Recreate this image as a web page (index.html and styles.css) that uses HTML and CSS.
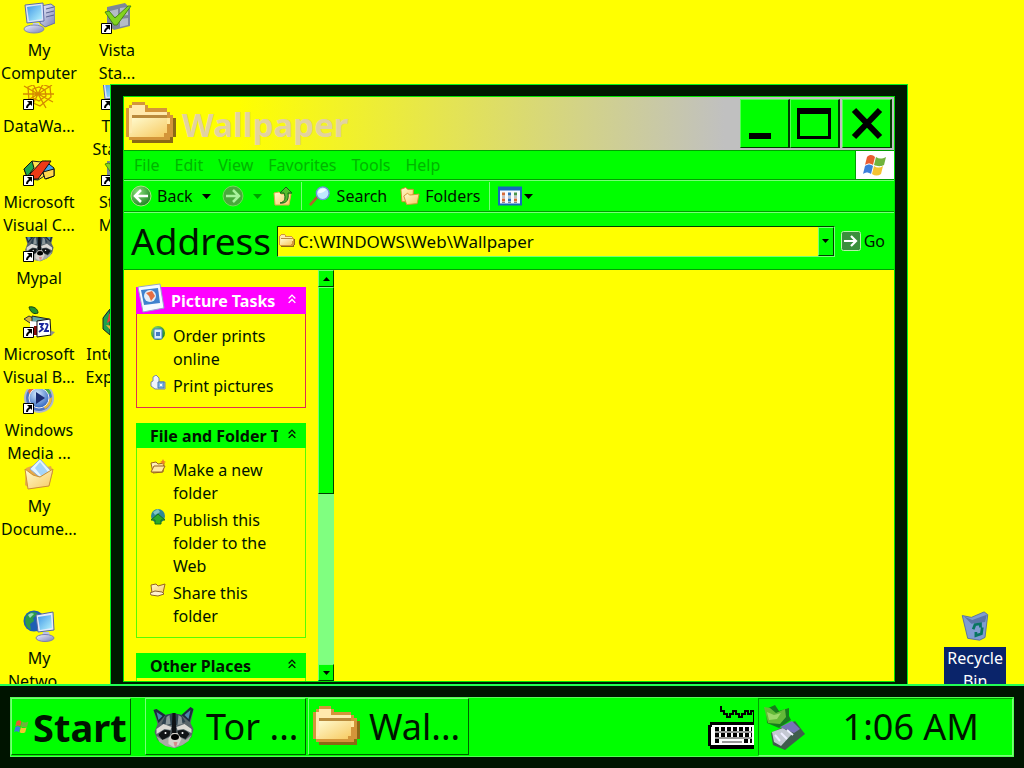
FILE: index.html
```html
<!DOCTYPE html>
<html lang="en">
<head>
<meta charset="utf-8">
<title>Wallpaper</title>
<link rel="stylesheet" href="styles.css">
</head>
<body>
<svg class="sprites" aria-hidden="true">
  <defs>
    <linearGradient id="gold" x1="0" y1="0" x2="1" y2="1"><stop offset="0" stop-color="#fffbd0"/><stop offset="1" stop-color="#f7ca62"/></linearGradient>
    <linearGradient id="screen" x1="0" y1="0" x2="1" y2="1"><stop offset="0" stop-color="#3f97e8"/><stop offset="1" stop-color="#b8f4fc"/></linearGradient>
    <linearGradient id="metal" x1="0" y1="0" x2="1" y2="1"><stop offset="0" stop-color="#f4f4ff"/><stop offset="1" stop-color="#7880b4"/></linearGradient>
    <radialGradient id="green" cx=".35" cy=".3" r=".8"><stop offset="0" stop-color="#8ae07a"/><stop offset="1" stop-color="#167c1c"/></radialGradient>
    <radialGradient id="blue" cx=".4" cy=".3" r=".8"><stop offset="0" stop-color="#d8ecff"/><stop offset="1" stop-color="#1c56b8"/></radialGradient>
  </defs>
  <symbol id="shortcut" viewBox="0 0 11 11"><path fill="#fff" stroke="#000" d="M.5.5h10v10H.5z"/><path d="M4 2h5v5L7.500 5.500C6 6.500 5 7.500 5 9H3c0-2 1-3.500 3-5z"/></symbol>
  <symbol id="folder" viewBox="0 0 16 14"><g shape-rendering="crispEdges"><path fill="#8a6a14" d="M2 12h11v-1h2V5h1v6h-1v2H2z"/><path fill="#d3953a" d="M1 1h1V0h4v1h1v1h6v1h1v1h1v7h-1v1H1v-1H0V2h1z"/><path fill="#ffe9ac" d="M1 2h1V1h4v2h7v1H3v1H2v5H1z"/><path fill="#b98a3c" d="M2 4h11v1H2z"/><path fill="url(#gold)" d="M2 5h11v5h-1v1H1v-1h1z"/><path fill="#ffe9a0" d="M13 5h1v2h-1z"/></g></symbol>
  <symbol id="flag" viewBox="0 0 24 22"><path fill="#e95b31" d="M4 3c3-3 6-2 8 0l-2 8c-3-2-5-2-8 0z"/><path fill="#70b33c" d="M13 3c3 2 6 2 10 0l-2 8c-4 2-7 1-10 0z"/><path fill="#3b7edb" d="M2 12c3-2 5-2 8 0l-2 8c-3-2-5-2-8 0z"/><path fill="#f3c331" d="M11 12c3 2 6 2 9 0l-2 8c-3 2-6 2-9 0z"/></symbol>
  <symbol id="computer" viewBox="0 0 32 32"><path fill="url(#metal)" stroke="#6870a0" d="M18 4l10-2 4 3v16l-10 4-5-4z"/><path fill="none" stroke="#59628f" d="M23 7l8-2M23 11l8-2M23 15l8-2"/><path fill="#dde4f8" stroke="#5a6ba8" d="M2 3l18-2 1 18-17 2z"/><path fill="url(#screen)" d="M4 5l14-2 1 14-13 2z"/><path fill="#c4cdec" d="M10 21h6l1 4h-8z"/><ellipse cx="11" cy="27" rx="10" ry="4" fill="url(#metal)" stroke="#8088b0"/></symbol>
  <symbol id="network" viewBox="0 0 32 32"><circle cx="11" cy="11" r="10.500" fill="#1d5fb4"/><path fill="#2d9c46" d="M3 6c4-5 9-5 12-2l-5 4 1 3-4 3 1 6C3 18 1 12 3 6z"/><path fill="#9adbb4" d="M5 5c2-2 5-2 6-1L7 8z"/><path fill="#e4eafa" stroke="#5366a4" d="M13 5l17-3 1 18-16 2z"/><path fill="url(#screen)" d="M15 7l13-2 1 13-12 2z"/><path fill="#bcc2e8" d="M20 22h6l1 4h-8z"/><ellipse cx="22" cy="28" rx="9" ry="3.500" fill="url(#metal)" stroke="#7d7eb0"/></symbol>
  <symbol id="raccoon" viewBox="0 0 44 44"><path fill="#5a666a" d="M2 5l3-1 9 6 8-2 8 2 9-8 3 3-3 13 3 6-2 8-7 7-9 4-10-2-8-6-3-8 3-8z"/><path fill="#1c2c3c" d="M2 5l3-1 9 6-7 8zM42 4l-3-2-9 8 8 7z"/><path fill="#4c86ac" d="M5 7l6 4-4 4zM39 5l-6 5 4 4z"/><path fill="#2f424e" d="M14 10l8-2 8 2 4 7-9 3h-5l-10-1z"/><path fill="#8a9698" d="M15 12l3-2 1 9-5 1zM27 10l3 2 1 7-5 1z"/><path fill="#0f1214" d="M21 8h3l1 22h-5z"/><path fill="#dcdad4" d="M5 24l7-5 8 3-1 3-6-1-8 5zM25 22l8-3 7 5v4l-8-4-6 1z"/><path fill="#111416" d="M7 30c3-5 7-6 12-4l-1 5-7 4zM26 26c5-2 9-1 12 3l-4 5-7-3z"/><path fill="#a9aaa5" d="M5 31l6 4 8-3 3-3 6 3 6 3 6-5-3 6-6 4-8 3-9-2-6-4z"/><path fill="#d7d2cb" d="M17 33l4-5h5l4 6-3 6-5 2-5-3z"/><ellipse cx="23.500" cy="32" rx="4" ry="3"/><path fill="#d98c8c" d="M22 37h4l-1 4h-2z"/><circle cx="14" cy="28" r="1" fill="#fff"/><circle cx="31" cy="28" r="1" fill="#fff"/></symbol>
  <symbol id="check" viewBox="0 0 32 32"><path fill="#7e8796" d="M6 5l18-4 5 5v18l-16 4-7-5z"/><path fill="#b5bcc6" d="M9 9l8-2v7l-8 2zM19 6l8-1v8l-8 1zM19 17l8-1v7l-8 2z"/><path fill="#83d51e" stroke="#4a8a10" d="M4 10l4-1 6 7L27 4h3L16 23h-3z"/></symbol>
  <symbol id="web" viewBox="0 0 32 32"><g fill="none" stroke="#d48a00" stroke-width="1.300"><path d="M1 8l14 8 14-9M2 24l13-8 15 8M8 2l7 14 7-14M8 30l7-14 8 14M0 16h31"/><path d="M10 11l6-2 6 3 1 6-7 5-6-3zM5 9l10-4 12 4 1 10-11 9-11-5z"/></g></symbol>
  <symbol id="visualc" viewBox="0 0 32 32"><path fill="#ffe34e" stroke="#222" d="M1 15l8-8 9 1 5 13-8 5-10-1z"/><path fill="#20a84a" stroke="#111" d="M1 15l8-8 2 7-7 9z"/><path fill="#47a5e8" stroke="#111" d="M22 7l9 7v8l-8 3-4-7z"/><path fill="#ffd84d" stroke="#111" d="M20 18l11-3v7l-9 3z"/><path fill="#ee3a16" stroke="#111" d="M7 20L19 7h9L15 25H8z"/></symbol>
  <symbol id="visualb" viewBox="0 0 32 32"><path fill="#249526" stroke="#154016" d="M6 1c5-1 9 2 9 6-4 2-8-1-9-6z"/><path fill="#d7b73f" stroke="#333" d="M1 13l5-3 6 3-5 4z"/><path fill="#67a8a4" stroke="#222" d="M9 10l17 3v6L9 16z"/><path fill="#fff" d="M7 15l9 1v14H7z"/><path fill="#8b0d0d" d="M11 20h3v9h-3z"/><path fill="#fff" stroke="#111" d="M14 15l13-2 1 16-14 2z"/><path fill="none" stroke="#1a259f" stroke-width="1.800" d="M16 18h4l-2 3 2 2-4 3M22 18c4-1 3 2 0 7h4"/><path fill="#8b908c" d="M28 25l4 1-4 4z"/></symbol>
  <symbol id="media" viewBox="0 0 32 32"><circle cx="16" cy="16" r="14" fill="#5075c4" stroke="#b1bacb" stroke-width="2"/><path fill="#e76d3b" d="M5 9A13 13 0 0 1 16 3v6L8 15z"/><path fill="#49aa4c" d="M17 3a13 13 0 0 1 11 8l-7 4z"/><path fill="#e8b73c" d="M29 15a13 13 0 0 1-7 12l-3-5z"/><circle cx="16" cy="16" r="10" fill="url(#blue)" stroke="#eee"/><path fill="#1b2c72" d="M13 10l9 6-9 6z"/></symbol>
  <symbol id="documents" viewBox="0 0 32 32"><path fill="#e6aa48" d="M3 10l8-3 5 4 12-3 2 6-4 14-19 3-5-4z"/><path fill="#e3f5ff" stroke="#90afd6" d="M7 11l10-10 12 13-9 8z"/><path fill="#a5d5fa" d="M12 10l5-6 8 10-6 5z"/><path fill="url(#gold)" stroke="#cc9034" d="M2 11l8 6 7 2 13-8-4 17-21 3z"/></symbol>
  <symbol id="ie" viewBox="0 0 32 32"><circle cx="16" cy="16" r="14" fill="#278bd7"/><path fill="#20a14a" stroke="#222" d="M9 3l-7 9v11l7 6z"/><path fill="#e33e34" d="M8 8l5-3-1 8-6 4z"/><path fill="#f2b632" d="M5 19l7 1v7z"/></symbol>
  <symbol id="bin" viewBox="0 0 32 34"><path fill="#7f9cd0" stroke="#526ca4" d="M2 5l10 2L26 1l4 3-3 25-6 3-13-2z"/><path fill="#5b76a6" d="M4 6l9 4 16-6-2 8-15 2z"/><path fill="none" stroke="#08755f" stroke-width="3" d="M14 20l2-5 6-1v4M24 18l-1 7-6 2v-4"/></symbol>
  <symbol id="back" viewBox="0 0 22 22"><circle cx="11" cy="11" r="10" fill="url(#green)" stroke="#b1dc89"/><path fill="none" stroke="#fff" stroke-width="2.500" d="M18 11H6M11 5l-6 6 6 6"/></symbol>
  <symbol id="forward" viewBox="0 0 22 22"><circle cx="11" cy="11" r="10" fill="#4aa93c" stroke="#76d45d"/><path fill="none" stroke="#a8f29c" stroke-width="2.500" d="M4 11h12M11 5l6 6-6 6"/></symbol>
  <symbol id="down" viewBox="0 0 9 5"><path d="M0 0h9L4.500 5z"/></symbol>
  <symbol id="up" viewBox="0 0 20 20"><path fill="url(#gold)" stroke="#e0a848" d="M1 7l5-1 2 2h10l-2 11H2z"/><path fill="#53bd2c" stroke="#17621c" d="M7 17c5-1 6-5 4-10H7l6-6 6 6h-4c1 6-1 11-8 10z"/></symbol>
  <symbol id="search" viewBox="0 0 24 22"><path stroke="#ad642b" stroke-width="3" d="M1 21l8-9"/><circle cx="15" cy="8" r="7" fill="#bfe9fc" stroke="#708fda" stroke-width="1.500"/><path fill="#f1fdff" d="M10 6c2-4 7-4 9-2-2 2-5 4-9 4z"/></symbol>
  <symbol id="folders" viewBox="0 0 21 20"><path fill="url(#gold)" stroke="#cf8b2a" d="M1 3l5-2 2 2h6v4l-3 9-9 0z"/><path fill="url(#gold)" stroke="#d39637" d="M4 10l4-3 2 2 10-1-2 10-11 1z"/></symbol>
  <symbol id="views" viewBox="0 0 24 19"><path fill="#f7faff" stroke="#1669bd" stroke-width="2" d="M1 1h22v17H1z"/><path fill="#1669bd" d="M1 1h22v3H1z"/><path fill="#d56c3b" d="M4 6h3v3H4zM4 12h3v3H4zM16 12h3v3h-3z"/><path fill="#326fb9" d="M10 6h3v3h-3zM10 12h3v3h-3z"/><path fill="#4a944a" d="M16 6h3v3h-3z"/><path stroke="#888" stroke-dasharray="3 3" d="M4 10.500h15M4 16h15"/></symbol>
  <symbol id="go" viewBox="0 0 20 20"><rect x=".5" y=".5" width="19" height="19" rx="2" fill="#3b8f3c" stroke="#b8f2aa"/><path fill="none" stroke="#fff" stroke-width="2.200" d="M3 10h12M10 5l5 5-5 5"/></symbol>
  <symbol id="minimize" viewBox="0 0 36 36"><path d="M2 27h22v6H2z"/></symbol>
  <symbol id="maximize" viewBox="0 0 36 36"><path fill-rule="evenodd" d="M0 2h34v31H0zm3 6v22h28V8z"/></symbol>
  <symbol id="close" viewBox="0 0 36 36"><path fill="none" stroke="#000" stroke-width="6" d="M5 4l26 27M31 4L5 31"/></symbol>
  <symbol id="chevrons" viewBox="0 0 7 9"><path fill="none" stroke="currentColor" stroke-width="1.200" d="M.5 4L3.500 1l3 3M.5 8l3-3 3 3"/></symbol>
  <symbol id="photo" viewBox="0 0 28 30"><path fill="#f6fbff" stroke="#99a5ca" d="M1 4l22-3 4 24-21 4z"/><path fill="#3f82ce" d="M4 7l17-2 2 15-16 2z"/><circle cx="13" cy="13" r="6" fill="#e4eff9"/><path fill="#e56e43" d="M9 10l6-2 3 5-4 5-2-5z"/></symbol>
  <symbol id="order" viewBox="0 0 16 16"><circle cx="8" cy="8" r="7" fill="url(#green)"/><path fill="#d8edfc" stroke="#457abb" d="M4 4h8v10H4z"/><path fill="#447ac0" d="M6 7h4v4H6z"/></symbol>
  <symbol id="print" viewBox="0 0 16 16"><path fill="#f0f4fa" stroke="#7888a2" d="M3 6V2l3-2 3 3v4h6v7H5l-4-3V7z"/><path fill="#83b9e7" stroke="#4879b3" d="M8 7h6v6H8z"/><path fill="#fff" d="M10 9h2v2h-2z"/></symbol>
  <symbol id="newfolder" viewBox="0 0 16 16"><path fill="url(#gold)" stroke="#986221" d="M1 4l5-1 2 2 6-1-1 9-10 1z"/><path fill="#ffe9a5" stroke="#986221" d="M1 13l3-6h11l-3 6z"/><path fill="#f18023" d="M13 0l1 2 2 1-2 1-1 2-1-2-2-1 2-1z"/></symbol>
  <symbol id="publish" viewBox="0 0 16 16"><circle cx="8" cy="7" r="7" fill="#2e8996"/><path fill="#81c3c0" d="M3 3l5-3 2 3-5 3z"/><path fill="#2daa26" stroke="#17711c" d="M8 5l7 6h-4v4H5v-4H1z"/></symbol>
  <symbol id="share" viewBox="0 0 16 16"><path fill="url(#gold)" stroke="#986221" d="M1 3l5-1 2 2 7-2-2 9H2z"/><path fill="#fff2cf" stroke="#8b642f" d="M0 11l5-2 7 1 2 2-6 2-7-1z"/></symbol>
  <symbol id="keyboard" viewBox="0 0 46 44"><g shape-rendering="crispEdges"><path fill="none" stroke="#000" stroke-width="2" d="M13 1v5h3v3h3v3h3V9h3V6h3v3h3v3h3V9h3V6h3v3h3V6h3v11"/><path d="M2 17h44v27H2v-3H0V20h2z"/><path fill="#fff" d="M4 20h42v20H3V22h1z"/><path stroke="#000" stroke-width="4" stroke-dasharray="4 2" d="M7 24h37M7 30h37M7 36h5M36 36h8"/><path stroke="#999" stroke-width="2" d="M7 27h37M7 33h37M14 37h20"/></g></symbol>
  <symbol id="hardware" viewBox="0 0 42 46"><path fill="#177c1c" d="M3 5l9-4 4 6 10-3v8l2 4-12 8L4 19z"/><path fill="#63ba38" d="M1 3l6 1 6 5 9-4 1 8-6 7-12-1z"/><path fill="#9bd96a" d="M4 8l7 3 7-2-4 6-8 1z"/><path fill="#3f5c4c" d="M8 29l24-12 10 13-20 16-12-5z"/><path fill="#c4c8d2" d="M9 28l11-4 9 6-11 12-7-4z"/><path fill="#7874b7" d="M17 23l12-6 8 8-6 4z"/><path stroke="#eef" stroke-width="2" d="M12 31l5 6M18 29l6 6M24 26l6 5"/></symbol>
</svg>

<main class="desktop">
  <div class="icons">
    <a class="shortcut" href="#"><svg class="art"><use href="#computer"/></svg><span class="caption">My<br>Computer</span></a>
    <a class="shortcut" href="#"><svg class="art"><use href="#web"/></svg><svg class="badge"><use href="#shortcut"/></svg><span class="caption">DataWa...</span></a>
    <a class="shortcut" href="#"><svg class="art"><use href="#visualc"/></svg><svg class="badge"><use href="#shortcut"/></svg><span class="caption">Microsoft<br>Visual C...</span></a>
    <a class="shortcut" href="#"><svg class="art"><use href="#raccoon"/></svg><svg class="badge"><use href="#shortcut"/></svg><span class="caption">Mypal</span></a>
    <a class="shortcut" href="#"><svg class="art"><use href="#visualb"/></svg><svg class="badge"><use href="#shortcut"/></svg><span class="caption">Microsoft<br>Visual B...</span></a>
    <a class="shortcut" href="#"><svg class="art"><use href="#media"/></svg><svg class="badge"><use href="#shortcut"/></svg><span class="caption clear">Windows<br>Media ...</span></a>
    <a class="shortcut" href="#"><svg class="art"><use href="#documents"/></svg><span class="caption">My<br>Docume...</span></a>
    <a class="shortcut last-row" href="#"><svg class="art"><use href="#network"/></svg><span class="caption">My<br>Netwo...</span></a>
    <a class="shortcut second" href="#"><svg class="art"><use href="#check"/></svg><svg class="badge"><use href="#shortcut"/></svg><span class="caption">Vista<br>Sta...</span></a>
    <a class="shortcut second" href="#"><svg class="art"><use href="#computer"/></svg><svg class="badge"><use href="#shortcut"/></svg><span class="caption">Tiny<br>Start...</span></a>
    <a class="shortcut second" href="#"><svg class="art"><use href="#check"/></svg><svg class="badge"><use href="#shortcut"/></svg><span class="caption">Style<br>Ma...</span></a>
    <a class="shortcut second fifth-row" href="#"><svg class="art"><use href="#ie"/></svg><span class="caption">Internet<br>Explorer</span></a>
  </div>
  <a class="shortcut recycle" href="#"><svg class="art"><use href="#bin"/></svg><span class="caption">Recycle<br>Bin</span></a>

  <section class="window">
    <div class="frame">
      <header class="titlebar">
        <svg class="title-icon"><use href="#folder"/></svg>
        <h1 class="title">Wallpaper</h1>
        <div class="pair">
          <button class="caption-button" aria-label="Minimize"><svg><use href="#minimize"/></svg></button>
          <button class="caption-button" aria-label="Maximize"><svg><use href="#maximize"/></svg></button>
        </div>
        <button class="caption-button" aria-label="Close"><svg><use href="#close"/></svg></button>
      </header>
      <div class="menubar">
        <nav class="menu">
          <button>File</button><button>Edit</button><button>View</button><button>Favorites</button><button>Tools</button><button>Help</button>
        </nav>
        <div class="brand"><svg><use href="#flag"/></svg></div>
      </div>
      <div class="toolbar">
        <button class="tool"><svg class="i22"><use href="#back"/></svg>Back</button>
        <button class="drop" aria-label="Back history"><svg><use href="#down"/></svg></button>
        <button class="tool" aria-label="Forward" disabled><svg class="i22"><use href="#forward"/></svg></button>
        <button class="drop faded" aria-label="Forward history" disabled><svg><use href="#down"/></svg></button>
        <button class="tool" aria-label="Up"><svg class="i20"><use href="#up"/></svg></button>
        <span class="rule"></span>
        <button class="tool"><svg class="i24"><use href="#search"/></svg>Search</button>
        <button class="tool folders"><svg class="i20"><use href="#folders"/></svg>Folders</button>
        <span class="rule"></span>
        <button class="tool views" aria-label="Views"><svg class="i24"><use href="#views"/></svg><svg class="arrow"><use href="#down"/></svg></button>
      </div>
      <form class="addressbar">
        <label class="address-label" for="address">Address</label>
        <div class="combo">
          <svg class="i16"><use href="#folder"/></svg>
          <input id="address" type="text" value="C:\WINDOWS\Web\Wallpaper">
          <button type="button" class="combo-button" aria-label="Show addresses"><svg><use href="#down"/></svg></button>
        </div>
        <button type="button" class="go"><svg class="i20"><use href="#go"/></svg>Go</button>
      </form>
      <div class="content">
        <aside class="sidebar">
          <section class="panel picture">
            <button class="panel-head"><svg class="photo"><use href="#photo"/></svg><span class="panel-title">Picture Tasks</span><svg class="chevrons"><use href="#chevrons"/></svg></button>
            <div class="panel-body">
              <a class="task" href="#"><svg class="i16"><use href="#order"/></svg><span>Order prints online</span></a>
              <a class="task" href="#"><svg class="i16"><use href="#print"/></svg><span>Print pictures</span></a>
            </div>
          </section>
          <section class="panel">
            <button class="panel-head"><span class="panel-title">File and Folder Tasks</span><svg class="chevrons"><use href="#chevrons"/></svg></button>
            <div class="panel-body">
              <a class="task" href="#"><svg class="i16"><use href="#newfolder"/></svg><span>Make a new folder</span></a>
              <a class="task" href="#"><svg class="i16"><use href="#publish"/></svg><span>Publish this folder to the Web</span></a>
              <a class="task" href="#"><svg class="i16"><use href="#share"/></svg><span>Share this folder</span></a>
            </div>
          </section>
          <section class="panel">
            <button class="panel-head"><span class="panel-title">Other Places</span><svg class="chevrons"><use href="#chevrons"/></svg></button>
            <div class="panel-body"></div>
          </section>
        </aside>
        <div class="scrollbar">
          <button class="scroll-button" aria-label="Scroll up"><svg class="flip"><use href="#down"/></svg></button>
          <div class="track"><div class="thumb"></div></div>
          <button class="scroll-button" aria-label="Scroll down"><svg><use href="#down"/></svg></button>
        </div>
        <div class="files"></div>
      </div>
    </div>
  </section>
</main>

<footer class="taskbar">
  <div class="taskbar-inner">
    <button class="start"><svg><use href="#flag"/></svg>Start</button>
    <div class="tasks">
      <button class="task-button"><svg class="task-icon"><use href="#raccoon"/></svg>Tor ...</button>
      <button class="task-button"><svg class="task-icon"><use href="#folder"/></svg>Wal...</button>
    </div>
    <button class="keyboard" aria-label="Keyboard layout"><svg><use href="#keyboard"/></svg></button>
    <div class="tray">
      <svg class="hardware"><use href="#hardware"/></svg>
      <time class="clock">1:06 AM</time>
    </div>
  </div>
</footer>
</body>
</html>
```
FILE: styles.css
```css
* { box-sizing: border-box; }

body {
  margin: 0;
  height: 100vh;
  display: flex;
  flex-direction: column;
  overflow: hidden;
  background: #ff0;
  color: #001400;
  font: 16px/23px "Comic Sans MS", "Noto Sans", sans-serif;
}

button, input { font: inherit; color: inherit; }
button { padding: 0; border: 0; background: none; text-align: left; white-space: nowrap; }
a { color: inherit; text-decoration: none; }
svg { display: block; flex: none; }
.sprites { position: absolute; width: 0; height: 0; }

.i16 { width: 16px; height: 16px; }
.i20 { width: 20px; height: 20px; }
.i22 { width: 22px; height: 22px; }
.i24 { width: 24px; height: 20px; }

/* Desktop */
.desktop { position: relative; flex: 1; min-height: 0; overflow: hidden; }
.icons {
  display: grid;
  grid-template: repeat(9, 76px) / repeat(2, 78px);
  grid-auto-flow: column;
}
.shortcut {
  position: relative;
  display: flex;
  flex-direction: column;
  align-items: center;
  gap: 5px;
  padding-top: 2px;
  height: 76px;
  text-align: center;
  white-space: nowrap;
}
.last-row { grid-row: 9; }
.second { grid-column: 2; }
.fifth-row { grid-row: 5; }
.art { width: 32px; height: 32px; }
.badge { position: absolute; left: 23px; top: 23px; width: 11px; height: 11px; }
.caption { position: relative; z-index: 1; background: #ff0; }
.clear { z-index: auto; background: none; }
.recycle { position: absolute; right: 18px; bottom: -1px; }
.recycle .art { height: 31px; }
.recycle .caption { padding: 0 3px; background: #0a246a; color: #fff; }

/* Explorer window */
.window {
  position: absolute;
  z-index: 2;
  inset: 84px 116px -10px 110px;
  padding: 11px 12px;
  border: 1px solid #00f020;
  background: #001800;
}
.frame {
  display: flex;
  flex-direction: column;
  height: 100%;
  border: 1px solid #00e000;
  background: #0f0;
}
.titlebar {
  display: flex;
  align-items: center;
  gap: 2px;
  height: 53px;
  padding: 0 2px;
  background: linear-gradient(to right, #ff0 15%, #c0c0c0 78%);
}
.title-icon { width: 50px; height: 44px; }
.title {
  flex: 1;
  margin: 0;
  padding: 3px 0 0 4px;
  color: #e2d2a0;
  font-size: 33px;
  line-height: 44px;
}
.pair { display: flex; }
.caption-button {
  display: grid;
  place-items: center;
  width: 50px;
  height: 49px;
  border: 1px solid;
  border-color: #5f5 #003c00 #003c00 #5f5;
  border-right-width: 2px;
  background: #0f0;
}
.caption-button svg { width: 36px; height: 36px; }

.menubar { display: flex; height: 30px; border-top: 1px solid #00a000; border-bottom: 1px solid #00a000; }
.menu { display: flex; flex: 1; align-items: center; gap: 15px; padding-left: 10px; color: #00b400; }
.brand { display: grid; place-items: center; width: 39px; border-left: 1px solid #00a000; background: #fff; }
.brand svg { width: 24px; height: 22px; }

.toolbar { display: flex; align-items: center; height: 32px; padding-left: 6px; border-top: 1px solid #7f7; border-bottom: 1px solid #00a000; }
.tool { display: flex; align-items: center; gap: 5px; }
.drop { padding: 0 11px 0 9px; }
.drop svg, .arrow { width: 9px; height: 5px; }
.faded { fill: #00a000; }
.rule { width: 1px; height: 28px; margin: 0 6px 0 8px; background: #7f7; }
.folders { margin-left: 13px; }
.rule + .views { margin-left: 2px; gap: 2px; }

.addressbar { display: flex; align-items: center; gap: 6px; height: 58px; padding: 0 9px 0 7px; border-top: 1px solid #7f7; border-bottom: 1px solid #00a000; }
.address-label { font-size: 37px; line-height: 50px; }
.combo { display: flex; flex: 1; align-items: center; height: 31px; padding-left: 1px; border: 1px solid; border-color: #004000 #7f7 #7f7 #004000; background: #ff0; }
.combo input { flex: 1; min-width: 0; padding: 0 3px; border: 0; outline: 0; background: none; font-size: 17px; }
.combo-button, .scroll-button { display: grid; place-items: center; width: 16px; border: 1px solid; border-color: #7f7 #004000 #004000 #7f7; background: #0f0; }
.combo-button { height: 29px; }
.combo-button svg, .scroll-button svg { width: 7px; height: 4px; }
.go { display: flex; align-items: center; gap: 3px; }

.content { display: flex; flex: 1; min-height: 0; overflow: hidden; background: #ff0; }
.sidebar { display: flex; flex-direction: column; gap: 15px; width: 194px; padding: 17px 12px 0; overflow: hidden; }
.panel { flex: none; }
.panel-head { position: relative; display: flex; align-items: center; gap: 10px; width: 100%; height: 25px; padding: 2px 10px 0 14px; background: #0f0; font-weight: bold; }
.panel-title { flex: 1; min-width: 0; overflow: hidden; }
.chevrons { width: 8px; height: 10px; margin-bottom: 5px; }
.panel-body { display: flex; flex-direction: column; gap: 4px; padding: 11px 28px 9px 13px; border: 1px solid #5f0; border-top: 0; }
.task { display: flex; gap: 7px; }
.picture .panel-head { height: 27px; padding-left: 35px; background: #f0f; color: #fff; }
.picture .panel-body { border-color: #e03050; }
.photo { position: absolute; left: 1px; bottom: 1px; width: 28px; height: 30px; }

.scrollbar { display: flex; flex-direction: column; width: 16px; background: #80ff80; }
.scroll-button { height: 17px; flex: none; }
.flip { transform: rotate(180deg); }
.track { flex: 1; }
.thumb { height: 55%; border: 1px solid; border-color: #7f7 #004000 #004000 #7f7; background: #0f0; }
.files { flex: 1; }

/* Taskbar */
.taskbar { flex: none; height: 84px; padding: 11px 10px; border-top: 2px solid #2f5; background: #001400; }
.taskbar-inner { display: flex; height: 60px; border: 1px solid #5f5; background: #0f0; font-size: 36px; line-height: 50px; }
.start, .task-button { display: flex; align-items: center; height: 57px; border: 1px solid; border-color: #7f7 #006000 #006000 #7f7; }
.start { width: 120px; gap: 4px; padding-left: 2px; font-size: 38px; font-weight: bold; }
.start svg { width: 15px; height: 15px; }
.tasks { display: flex; flex: 1; gap: 2px; padding-left: 14px; }
.task-button { width: 161px; gap: 9px; padding-left: 4px; }
.task-icon { width: 47px; height: 44px; }
.keyboard { display: grid; place-items: center; width: 54px; }
.keyboard svg { width: 46px; height: 44px; }
.tray { display: flex; align-items: center; gap: 38px; padding: 0 33px 0 4px; border: 1px solid; border-color: #00a000 #7f7 #7f7 #00a000; }
.hardware { width: 42px; height: 46px; }
```
